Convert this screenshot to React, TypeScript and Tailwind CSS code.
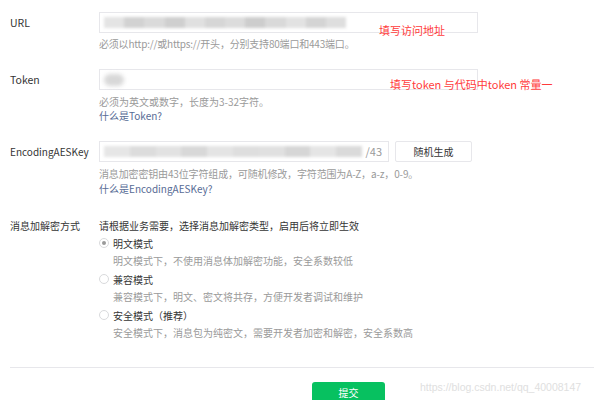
import React from "react";

const URL_BLOCKS = ["#e4e4e4", "#d2d2d2", "#dadada", "#cfcfcf", "#e0e0e0", "#d6d6d6", "#dcdcdc", "#cdcdcd", "#d9d9d9", "#e2e2e2", "#d4d4d4", "#dedede"];
const AES_BLOCKS = ["#e6e6e6", "#dcdcdc", "#e2e2e2", "#d8d8d8", "#e4e4e4", "#dedede", "#e0e0e0", "#d6d6d6", "#e5e5e5", "#dadada"];

function Blur({ blocks, w }: { blocks: string[]; w: number }) {
  return (
    <div className="flex h-[11px] blur-[1.5px]" style={{ width: w }}>
      {blocks.map((c, i) => (
        <div key={i} className="flex-1" style={{ background: c }} />
      ))}
    </div>
  );
}

function Radio({ checked, label, desc }: { checked?: boolean; label: string; desc: string }) {
  return (
    <div>
      <div className="flex items-center h-[18px]">
        <span className="w-[10px] h-[10px] rounded-full border border-[#d9dadc] flex items-center justify-center mr-[4px] bg-white">
          {checked && <span className="w-[4px] h-[4px] rounded-full bg-[#9a9a9a]" />}
        </span>
        <span className="text-[#353535]">{label}</span>
      </div>
      <div className="h-[18px] leading-[18px] pl-[14px] text-[#9a9a9a]">{desc}</div>
    </div>
  );
}

export default function App() {
  return (
    <div
      className="relative w-[594px] h-[400px] bg-white overflow-hidden text-[10px]"
      style={{ fontFamily: '"Noto Sans CJK SC", "Noto Sans", sans-serif' }}
    >
      <div className="pl-[10px] pt-[12px]">
        {/* URL */}
        <div className="flex">
          <div className="w-[89px] h-[21px] leading-[21px] text-[#353535] text-[10.5px]">URL</div>
          <div>
            <div className="w-[379px] h-[21px] border border-[#e7e7eb] flex items-center pl-[4px]">
              <Blur blocks={URL_BLOCKS} w={242} />
            </div>
            <div className="mt-[4px] leading-[14px] text-[#9a9a9a] tracking-[-0.2px]">
              必须以http://或https://开头，分别支持80端口和443端口。
            </div>
          </div>
        </div>

        {/* Token */}
        <div className="flex mt-[18px]">
          <div className="w-[89px] h-[21px] leading-[21px] text-[#353535] text-[10.5px]">Token</div>
          <div>
            <div className="w-[379px] h-[21px] border border-[#e7e7eb] flex items-center pl-[4px]">
              <div className="w-[20px] h-[12px] rounded-full bg-[#d8d8d8] blur-[2px]" />
            </div>
            <div className="mt-[5px] leading-[14px] text-[#9a9a9a]">必须为英文或数字，长度为3-32字符。</div>
            <div className="leading-[14px] text-[#576b95]">什么是Token?</div>
          </div>
        </div>

        {/* EncodingAESKey */}
        <div className="flex mt-[18px]">
          <div className="w-[89px] h-[21px] leading-[21px] text-[#353535] text-[10px]">EncodingAESKey</div>
          <div>
            <div className="flex">
              <div className="w-[290px] h-[21px] border border-[#e7e7eb] flex items-center pl-[4px] pr-[6px]">
                <Blur blocks={AES_BLOCKS} w={258} />
                <span className="ml-auto text-[#9a9a9a] text-[11px]">/43</span>
              </div>
              <button className="ml-[6px] w-[77px] h-[21px] border border-[#e7e7eb] rounded-[2px] text-[#353535] bg-white">
                随机生成
              </button>
            </div>
            <div className="mt-[4px] leading-[15px] text-[#9a9a9a] tracking-[-0.15px]">
              消息加密密钥由43位字符组成，可随机修改，字符范围为A-Z，a-z，0-9。
            </div>
            <div className="leading-[15px] text-[#576b95]">什么是EncodingAESKey?</div>
          </div>
        </div>

        {/* 消息加解密方式 */}
        <div className="flex mt-[22px]">
          <div className="w-[89px] leading-[16px] text-[#353535]">消息加解密方式</div>
          <div>
            <div className="leading-[16px] text-[#353535]">请根据业务需要，选择消息加解密类型，启用后将立即生效</div>
            <Radio checked label="明文模式" desc="明文模式下，不使用消息体加解密功能，安全系数较低" />
            <Radio label="兼容模式" desc="兼容模式下，明文、密文将共存，方便开发者调试和维护" />
            <Radio label="安全模式（推荐）" desc="安全模式下，消息包为纯密文，需要开发者加密和解密，安全系数高" />
          </div>
        </div>

        <div className="mt-[25px] h-px bg-[#e7e7eb]" />

        <div className="flex mt-[14px] pl-[302px]">
          <button className="w-[73px] h-[28px] rounded-[3px] bg-[#07c160] text-white text-[10px] leading-[22px] pb-[6px]">
            提交
          </button>
        </div>
      </div>

      {/* annotations */}
      <div className="absolute left-[379px] top-[22px] text-[11px] text-[#ff3c3c]">填写访问地址</div>
      <div className="absolute left-[390px] top-[76px] text-[11px] text-[#ff3c3c]">填写token 与代码中token 常量一</div>
      <div
        className="absolute left-[420px] top-[380px] text-[10.5px] text-[#e0e0e0]"
        style={{ fontFamily: '"Liberation Sans", Arial, sans-serif' }}
      >
        https://blog.csdn.net/qq_40008147
      </div>
    </div>
  );
}
